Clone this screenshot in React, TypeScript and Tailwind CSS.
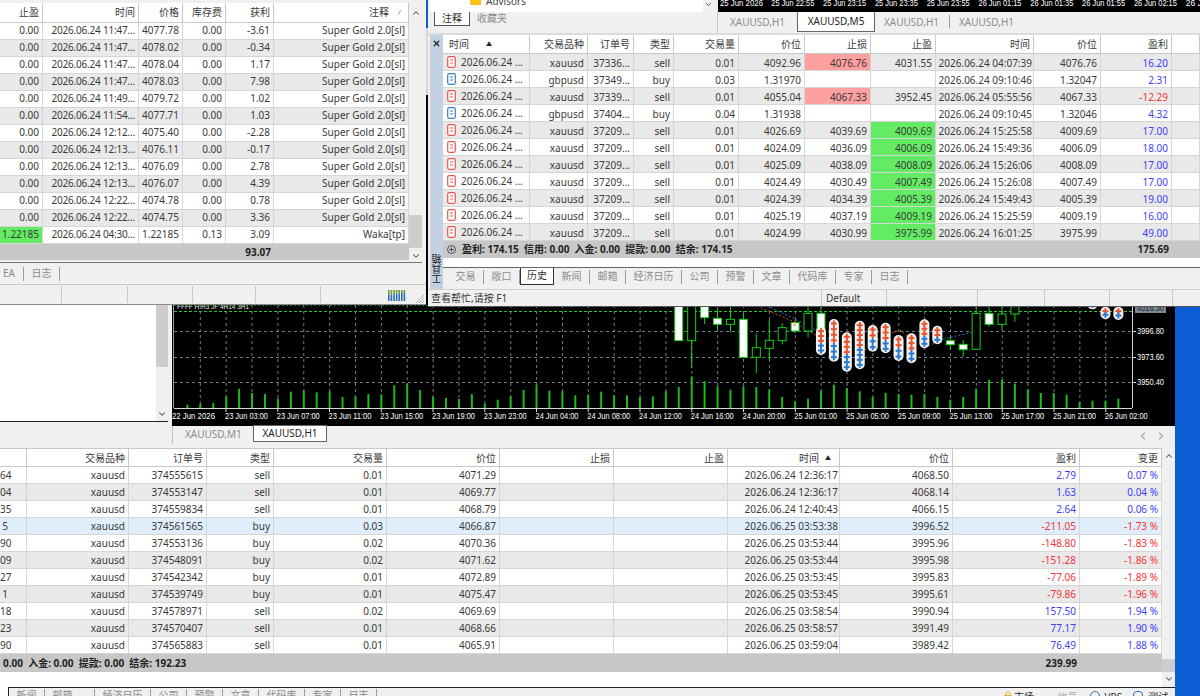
import React from "react";
import { X, ChevronUp, ChevronDown, ChevronLeft, ChevronRight, Lock } from "lucide-react";

type Cell = { t?: React.ReactNode; c?: string; bg?: string };
const cellBase = "h-[17px] text-right pr-[3px] border-r border-b border-[#d6d6d6] overflow-hidden whitespace-nowrap text-[#3a3a3a]";
const headBase = "leading-[19px] text-right pr-[3px] border-r border-[#c8c8c8] overflow-hidden whitespace-nowrap text-[#3a3a3a]";
const BLUE = "text-[#3f3ff5]";
const RED = "text-[#f23434]";
const GREEN = "bg-[#63ec63]";
const PINK = "bg-[#ffa0a0]";

function Row({ grid, cells, bg, lead }: { grid: string; cells: (string | Cell)[]; bg: string; lead: string }) {
  return (
    <div className={`grid ${grid} ${bg} ${lead}`}>
      {cells.map((c, i) => {
        const o: Cell = typeof c === "string" ? { t: c } : c;
        return (
          <div key={i} className={`${cellBase} ${o.c ?? ""} ${o.bg ?? ""}`}>
            {o.t}
          </div>
        );
      })}
    </div>
  );
}

function Head({ grid, labels, h }: { grid: string; labels: (string | React.ReactNode)[]; h: string }) {
  return (
    <div className={`grid ${grid} ${h} bg-white border-b border-[#c8c8c8]`}>
      {labels.map((l, i) => (
        <div key={i} className={headBase}>
          {l}
        </div>
      ))}
    </div>
  );
}

function TabItem({ label, w }: { label: string; w?: string }) {
  return (
    <div className={`px-[7.5px] h-[14px] leading-[13px] border-r border-[#9a9a9a] text-[#8c8c8c] whitespace-nowrap ${w ?? ""}`}>{label}</div>
  );
}

function DocIcon({ color }: { color: string }) {
  return (
    <svg width="9" height="12" viewBox="0 0 9 12" className="shrink-0">
      <rect x="0.7" y="0.7" width="7.6" height="10.6" rx="1.5" fill="#fff" stroke={color} strokeWidth="1.2" />
      <line x1="3" y1="4" x2="6" y2="4" stroke={color} strokeWidth="1" />
      <line x1="3" y1="7" x2="6" y2="7" stroke={color} strokeWidth="1" />
    </svg>
  );
}

/* ---------- top-left window ---------- */
const leftGrid = "grid-cols-[43px_96px_44px_43px_48px_135px]";
const leftRows = [
  ["11:47", "4077.78", "-3.61"],
  ["11:47", "4078.02", "-0.34"],
  ["11:47", "4078.04", "1.17"],
  ["11:47", "4078.03", "7.98"],
  ["11:49", "4079.72", "1.02"],
  ["11:54", "4077.71", "1.03"],
  ["12:12", "4075.40", "-2.28"],
  ["12:13", "4076.11", "-0.17"],
  ["12:13", "4076.09", "2.78"],
  ["12:13", "4076.07", "4.39"],
  ["12:22", "4074.78", "0.78"],
  ["12:22", "4074.75", "3.36"],
];

function LeftWindow() {
  const tight = "tracking-[-0.2px]";
  return (
    <div className="absolute left-0 top-0 w-[426px] h-[305px] bg-[#f0f0f0] flex flex-col border-b border-[#8a8a8a] z-20">
      <div className="h-[3px] shrink-0" />
      <div className="flex h-[257px] shrink-0">
        <div className="w-[409px] flex flex-col">
          <Head
            grid={leftGrid}
            h="h-[20px]"
            labels={[
              "止盈",
              "时间",
              "价格",
              "库存费",
              "获利",
              <span key="n" className="inline-flex items-center gap-[9px] pr-[4px]">
                注释
                <svg width="3" height="5" viewBox="0 0 3 5">
                  <line x1="0.3" y1="5" x2="2.7" y2="0" stroke="#999" strokeWidth="0.8" />
                </svg>
              </span>,
            ]}
          />
          {leftRows.map((r, i) => (
            <Row
              key={i}
              grid={leftGrid}
              lead="leading-[15px]"
              bg={i % 2 ? "bg-[#e9e9e9]" : "bg-white"}
              cells={["0.00", { t: `2026.06.24 ${r[0]}...`, c: tight }, r[1], "0.00", r[2], "Super Gold 2.0[sl]"]}
            />
          ))}
          <Row
            grid={leftGrid}
            lead="leading-[15px]"
            bg="bg-white"
            cells={[{ t: "1.22185", bg: GREEN }, { t: "2026.06.24 04:30...", c: tight }, "1.22185", "0.13", "3.09", "Waka[tp]"]}
          />
          <div className={`grid ${leftGrid} h-[17px] bg-[#c7c7c7]`}>
            <div className="col-span-5 text-right pr-[3px] font-bold leading-[16px] text-[#222]">93.07</div>
          </div>
        </div>
        <div className="w-[13px] flex flex-col items-center bg-[#f0f0f0] relative">
          <ChevronUp size={10} strokeWidth={2.5} className="mt-[5px] text-[#555]" />
          <div className="flex-1" />
          <div className="w-full h-[33px] bg-[#cdcdcd]" />
          <ChevronDown size={10} strokeWidth={2.5} className="mt-[3px] -mb-[1px] text-[#555]" />
        </div>
      </div>
      <div className="mt-[2px] h-[1px] w-[422px] bg-[#777]" />
      <div className="h-[21px] flex items-center shrink-0">
        <div className="pl-[3px] pr-[8px] h-[14px] leading-[13px] border-r border-[#9a9a9a] text-[#8c8c8c]">EA</div>
        <TabItem label="日志" />
      </div>
      <div className="flex-1 border-t border-[#c8c8c8] flex items-stretch relative">
        {["w-[62px]", "w-[66px]", "w-[65px]", "w-[63px]", "w-[65px]"].map((w) => (
          <div key={w} className={`${w} border-r border-[#c8c8c8] my-[1px]`} />
        ))}
        <svg width="19" height="11" viewBox="0 0 19 11" className="ml-[67px] mt-[5px]">
          {[0, 1, 2, 3, 4, 5, 6].map((i) => (
            <g key={i}>
              <rect x={i * 2.6} y={0} width="1.6" height={5 - i * 0.4} fill="#6b9a3c" />
              <rect x={i * 2.6} y={5 - i * 0.4} width="1.6" height={6 + i * 0.4} fill="#2f6fb5" />
            </g>
          ))}
        </svg>
        <svg width="9" height="9" viewBox="0 0 9 9" className="absolute right-[2px] bottom-[1px]">
          <path d="M9 1L1 9M9 4L4 9M9 7L7 9" stroke="#a0a0a0" strokeWidth="0.8" />
        </svg>
      </div>
    </div>
  );
}

/* ---------- top-right window ---------- */
const rightGrid = "grid-cols-[87px_58px_46px_40px_65px_66px_66px_65px_98px_67px_71px_28px]";

function sym(i: number) {
  const buy = i === 1 || i === 3;
  return (
    <div className="flex items-center h-full pl-[4px] gap-[5px]">
      <DocIcon color={buy ? "#3b80c4" : "#e8564e"} />
      <span>2026.06.24 ...</span>
    </div>
  );
}
type RR = [string, string, string, string, string, string, Cell | string, Cell | string, string, string, string];
const rightRows: RR[] = [
  ["xauusd", "37336...", "sell", "0.01", "4092.96", "", { t: "4076.76", bg: PINK }, "4031.55", "04:07:39", "4076.76", "16.20"],
  ["gbpusd", "37349...", "buy", "0.03", "1.31970", "", "", "", "09:10:46", "1.32047", "2.31"],
  ["xauusd", "37339...", "sell", "0.01", "4055.04", "", { t: "4067.33", bg: PINK }, "3952.45", "05:55:56", "4067.33", "-12.29"],
  ["gbpusd", "37404...", "buy", "0.04", "1.31938", "", "", "", "09:10:45", "1.32046", "4.32"],
  ["xauusd", "37209...", "sell", "0.01", "4026.69", "", "4039.69", { t: "4009.69", bg: GREEN }, "15:25:58", "4009.69", "17.00"],
  ["xauusd", "37209...", "sell", "0.01", "4024.09", "", "4036.09", { t: "4006.09", bg: GREEN }, "15:49:36", "4006.09", "18.00"],
  ["xauusd", "37209...", "sell", "0.01", "4025.09", "", "4038.09", { t: "4008.09", bg: GREEN }, "15:26:06", "4008.09", "17.00"],
  ["xauusd", "37209...", "sell", "0.01", "4024.49", "", "4030.49", { t: "4007.49", bg: GREEN }, "15:26:08", "4007.49", "17.00"],
  ["xauusd", "37209...", "sell", "0.01", "4024.39", "", "4034.39", { t: "4005.39", bg: GREEN }, "15:49:43", "4005.39", "19.00"],
  ["xauusd", "37209...", "sell", "0.01", "4025.19", "", "4037.19", { t: "4009.19", bg: GREEN }, "15:25:59", "4009.19", "16.00"],
  ["xauusd", "37209...", "sell", "0.01", "4024.99", "", "4030.99", { t: "3975.99", bg: GREEN }, "16:01:25", "3975.99", "49.00"],
];

const stripLabels = ["25 Jun 2026", "25 Jun 22:55", "25 Jun 23:15", "25 Jun 23:35", "25 Jun 23:55", "26 Jun 01:15", "26 Jun 01:35", "26 Jun 01:55", "26 Jun 02:15", "26 Jun"];

function TopStrip() {
  return (
    <svg width="482" height="12" viewBox="718 0 482 12" className="block bg-black">
      {stripLabels.map((l, i) => (
        <text key={i} x={i === 0 ? 720 : 719.5 + 51.8 * i} y="6" fill="#fff" fontFamily="'Liberation Sans', sans-serif" fontSize="8.5" textLength={i === 9 ? undefined : 43} lengthAdjust="spacingAndGlyphs">
          {l}
        </text>
      ))}
    </svg>
  );
}

function RightWindow() {
  return (
    <div className="absolute left-[428px] top-0 w-[772px] h-[307px] bg-[#f0f0f0] flex flex-col border-b border-[#555] z-10">
      <div className="h-[12px] flex shrink-0">
        <div className="w-[2px] bg-[#f0f0f0]" />
        <div className="w-[273px] bg-white relative overflow-hidden">
          <div className="absolute left-[40px] -top-[1px] w-[11px] h-[6px] bg-[#f8c41a]" />
          <div className="absolute left-[56px] -top-[5px] leading-[12px] text-[#444]">Advisors</div>
        </div>
        <div className="w-[10px] bg-[#f0f0f0] flex justify-center">
          <ChevronDown size={9} strokeWidth={2.5} className="text-[#555]" />
        </div>
        <div className="w-[5px]" />
        <TopStrip />
      </div>
      <div className="h-[23px] flex shrink-0 border-b-2 border-[#dcdcdc]">
        <div className="w-[290px] flex items-start pl-[6px] border-r border-[#c8c8c8]">
          <div className="w-[36px] h-[14px] leading-[13px] bg-white border-x border-b border-[#555] text-center text-[#333]">注释</div>
          <div className="ml-[7px] text-[#8c8c8c] leading-[13px]">收藏夹</div>
        </div>
        <div className="flex items-start pl-[12px]">
          <div className="w-[55px] text-[#8c8c8c] leading-[20px] whitespace-nowrap">XAUUSD,H1</div>
          <div className="ml-[12px] w-[78px] h-[20px] bg-white border border-t-0 border-[#666] text-center leading-[19px] text-[#222]">XAUUSD,M5</div>
          <div className="ml-[9px] w-[55px] text-[#8c8c8c] leading-[20px] whitespace-nowrap">XAUUSD,H1</div>
          <div className="ml-[10px] mt-[3px] w-[1px] h-[13px] bg-[#9a9a9a]" />
          <div className="ml-[9px] w-[55px] text-[#8c8c8c] leading-[20px] whitespace-nowrap">XAUUSD,H1</div>
        </div>
      </div>
      <div className="flex flex-1 min-h-0">
        <div className="w-[2px]" />
        <div className="w-[13px] h-[254px] bg-[#c3d2e2] flex flex-col items-center justify-between shrink-0">
          <X size={9} strokeWidth={3.5} className="mt-[4px] text-[#222]" />
          <div className="[writing-mode:vertical-rl] rotate-180 mb-[5px] leading-[12px] text-[#222]">工具箱</div>
        </div>
        <div className="flex-1 flex flex-col min-w-0">
          <Head
            grid={rightGrid}
            h="h-[19px]"
            labels={[
              <div key="a" className="flex items-center h-full pl-[6px] text-left">
                <span>时间</span>
                <span className="ml-[17px] text-[6px] text-[#222]">▲</span>
              </div>,
              "交易品种",
              "订单号",
              "类型",
              "交易量",
              "价位",
              "止损",
              "止盈",
              "时间",
              "价位",
              "盈利",
              "",
            ]}
          />
          {rightRows.map((r, i) => (
            <Row
              key={i}
              grid={rightGrid}
              lead="leading-[18px]"
              bg={i % 2 ? "bg-white" : "bg-[#e9e9e9]"}
              cells={[
                { t: sym(i), c: "!text-left !pr-0" },
                r[0],
                r[1],
                r[2],
                r[3],
                r[4],
                r[6],
                r[7],
                { t: `2026.06.24 ${r[8]}`, c: "!pr-[1px]" },
                r[9],
                { t: r[10], c: r[10].startsWith("-") ? RED : BLUE },
                "",
              ]}
            />
          ))}
          <div className="h-[17px] bg-[#c7c7c7] relative flex items-center pl-[4px] gap-[6px] font-bold text-[#222] shrink-0">
            <svg width="9" height="9" viewBox="0 0 9 9">
              <circle cx="4.5" cy="4.5" r="4" fill="none" stroke="#333" strokeWidth="0.8" />
              <path d="M2.3 4.5h4.4M4.5 2.3v4.4" stroke="#333" strokeWidth="0.8" />
            </svg>
            <span className="whitespace-nowrap">盈利: 174.15&nbsp; 信用: 0.00&nbsp; 入金: 0.00&nbsp; 提款: 0.00&nbsp; 结余: 174.15</span>
            <span className="absolute right-[31px] top-0 leading-[16px]">175.69</span>
          </div>
          <div className="h-[9px] bg-white shrink-0" />
          <div className="h-[22px] border-t border-[#666] flex items-start shrink-0 pl-[5px]">
            <div className="flex items-center h-[17px]">
              <TabItem label="交易" />
              <TabItem label="敞口" />
            </div>
            <div className="w-[34px] h-[17px] bg-white border-x border-b border-[#333] text-center leading-[15px] text-[#333]">历史</div>
            <div className="flex items-center h-[17px]">
              <TabItem label="新闻" />
              <TabItem label="邮箱" />
              <TabItem label="经济日历" />
              <TabItem label="公司" />
              <TabItem label="预警" />
              <TabItem label="文章" />
              <TabItem label="代码库" />
              <TabItem label="专家" />
              <TabItem label="日志" />
            </div>
          </div>
        </div>
      </div>
      <div className="h-[17px] shrink-0 border-t border-[#d0d0d0] flex relative">
        <div className="w-[394px] pl-[3px] leading-[16px] text-[#333] border-r border-[#c8c8c8]">查看帮忙,请按 F1</div>
        <div className="w-[65px] pl-[4px] leading-[16px] text-[#333] border-r border-[#c8c8c8]">Default</div>
        {["w-[91px]", "w-[67px]", "w-[65px]", "w-[63px]"].map((w) => (
          <div key={w} className={`${w} border-r border-[#c8c8c8]`} />
        ))}
      </div>
    </div>
  );
}

/* ---------- chart ---------- */
const barH = [10, 13, 15, 35, 58, 45, 42, 28, 49, 52, 47, 50, 33, 35, 42, 41, 68, 74, 54, 34, 30, 27, 42, 13, 25, 35, 54, 70, 52, 50, 38, 41, 49, 38, 38, 33, 35, 50, 63, 95, 80, 65, 55, 65, 63, 55, 33, 20, 28, 52, 70, 60, 50, 33, 45, 42, 40, 42, 33, 25, 33, 58, 85, 85, 73, 55, 45, 45, 40, 17, 22, 22, 28];
const bx = (i: number) => 187.4 + 12.93 * i;
const yv = (v: number) => 300 + v / 3;
// [index, white?, bodyTop, bodyBottom, wickTop, wickBottom] in 3x crop units
const candles: [number, boolean, number, number, number, number][] = [
  [38, true, 0, 122, 0, 122],
  [39, false, 0, 122, 0, 205],
  [40, true, 0, 53, 0, 72],
  [41, true, 55, 73, 25, 90],
  [42, false, 58, 73, 20, 98],
  [43, true, 58, 172, 40, 172],
  [44, false, 143, 172, 100, 220],
  [45, false, 121, 145, 60, 180],
  [46, false, 83, 122, 70, 133],
  [47, true, 68, 93, 60, 100],
  [48, false, 40, 93, 20, 112],
  [49, true, 40, 100, 20, 120],
  [50, false, 105, 165, 90, 175],
  [51, false, 140, 162, 120, 180],
  [52, false, 98, 152, 80, 170],
  [53, false, 95, 120, 80, 145],
  [54, false, 95, 125, 80, 145],
  [55, false, 125, 158, 110, 170],
  [56, false, 122, 165, 110, 180],
  [57, false, 90, 125, 70, 135],
  [58, false, 95, 120, 85, 130],
  [59, true, 122, 134, 110, 150],
  [60, true, 133, 149, 120, 170],
  [61, false, 40, 148, 20, 148],
  [62, true, 40, 73, 20, 80],
  [63, false, 42, 73, 20, 88],
  [64, false, 20, 42, 0, 65],
];
const pills: [number, number, number][] = [
  [49, 80, 165],
  [50, 57, 185],
  [51, 97, 215],
  [52, 62, 208],
  [53, 75, 155],
  [54, 68, 160],
  [55, 105, 183],
  [56, 100, 190],
  [57, 58, 145],
  [58, 77, 133],
  [70, 0, 28],
  [71, 20, 58],
  [72, 20, 60],
];
const tickX = [172, ...Array.from({ length: 18 }, (_, k) => 225 + 51.75 * k)];
const tickL = ["22 Jun 2026", "23 Jun 03:00", "23 Jun 07:00", "23 Jun 11:00", "23 Jun 15:00", "23 Jun 19:00", "23 Jun 23:00", "24 Jun 04:00", "24 Jun 08:00", "24 Jun 12:00", "24 Jun 16:00", "24 Jun 20:00", "25 Jun 01:00", "25 Jun 05:00", "25 Jun 09:00", "25 Jun 13:00", "25 Jun 17:00", "25 Jun 21:00", "26 Jun 02:00"];
const font = "'Liberation Sans', sans-serif";

function Pill({ i, a, b }: { i: number; a: number; b: number }) {
  const x = bx(i);
  const t = yv(a);
  const bt = yv(b);
  const n = Math.max(2, Math.floor((bt - t - 3) / 5));
  return (
    <g>
      <rect x={x - 5} y={t} width="10" height={bt - t} rx="5" fill="#f0f0f0" />
      {Array.from({ length: n }, (_, k) => {
        const cy = t + 4.5 + k * ((bt - t - 9) / Math.max(1, n - 1));
        const col = k < n / 2 ? "#e8562c" : "#2a7bd0";
        return (
          <g key={k}>
            <rect x={x - 3} y={cy - 1} width="6" height="2" fill={col} />
            <rect x={x - 1} y={cy - 3} width="2" height="6" fill={col} />
          </g>
        );
      })}
    </g>
  );
}

function Chart() {
  const gridV = Array.from({ length: 36 }, (_, k) => 200.3 + 25.87 * k);
  return (
    <svg width="1003" height="122" viewBox="172 304 1003 122" className="block bg-black">
      <line x1="173.5" y1="304" x2="173.5" y2="408" stroke="#9a9a9a" />
      <text x="177" y="309" fill="#e8e8e8" fontFamily={font} fontSize="7" textLength="72" lengthAdjust="spacingAndGlyphs">
        FFFF H.H3 JF 4H14 3H1
      </text>
      <line x1="174" y1="305" x2="1132" y2="305" stroke="#2fbf2f" strokeDasharray="2 2" />
      <line x1="174" y1="311.5" x2="1132" y2="311.5" stroke="#2fbf2f" strokeDasharray="3 2" />
      {[331, 357, 382].map((y) => (
        <line key={y} x1="174" y1={y + 0.5} x2="1132" y2={y + 0.5} stroke="#6f7b88" strokeDasharray="3 3" />
      ))}
      {gridV.map((x) => (
        <line key={x} x1={x} y1="305" x2={x} y2="408" stroke="#6f7b88" strokeDasharray="3 3" />
      ))}
      <polyline points="757,306 795,322 820,338 835,345" fill="none" stroke="#d0522a" strokeDasharray="2 2" />
      <polyline points="767,306 793,318 815,330 830,340" fill="none" stroke="#2a7bd0" strokeDasharray="2 2" />
      <polyline points="865,350 880,338 900,330 910,338" fill="none" stroke="#d0522a" strokeDasharray="2 2" />
      <polyline points="925,348 940,340 960,335 975,332" fill="none" stroke="#2a7bd0" strokeDasharray="2 2" />
      {barH.map((h, i) => (
        <rect key={i} x={bx(i) - 1} y={408 - h / 3} width="2" height={h / 3} fill="#1fb81f" />
      ))}
      {candles.map(([i, w, bt, bb, wt, wb]) => (
        <g key={i}>
          <line x1={bx(i)} y1={yv(wt)} x2={bx(i)} y2={yv(wb)} stroke="#12d012" />
          <rect x={bx(i) - 4} y={yv(bt)} width="8" height={(bb - bt) / 3} fill={w ? "#fff" : "#000"} stroke="#12d012" />
        </g>
      ))}
      <text x={bx(47) - 2} y="326" fill="#e8562c" fontFamily={font} fontSize="6">2</text>
      {pills.map(([i, a, b]) => (
        <Pill key={i} i={i} a={a} b={b} />
      ))}
      <line x1="174" y1="408.5" x2="1132" y2="408.5" stroke="#d8d8d8" />
      <line x1="1132.5" y1="305" x2="1132.5" y2="408" stroke="#d8d8d8" />
      {tickX.map((x, i) => (
        <g key={i}>
          {i > 0 && <line x1={x + 1} y1="408" x2={x + 1} y2="412" stroke="#d8d8d8" />}
          <text x={x} y="419" fill="#fff" fontFamily={font} fontSize="8.5" textLength="43" lengthAdjust="spacingAndGlyphs">
            {tickL[i]}
          </text>
        </g>
      ))}
      <rect x="1135" y="304" width="31" height="9" fill="#7c8a98" />
      <text x="1137" y="311" fill="#1c1c1c" fontFamily={font} fontSize="8.5" textLength="27" lengthAdjust="spacingAndGlyphs">4016.30</text>
      {[["3996.80", 334], ["3973.60", 360], ["3950.40", 385]].map(([l, y]) => (
        <g key={l as string}>
          <line x1="1132" y1={(y as number) - 2.5} x2="1136" y2={(y as number) - 2.5} stroke="#d8d8d8" />
          <text x="1137" y={y as number} fill="#fff" fontFamily={font} fontSize="8.5" textLength="27" lengthAdjust="spacingAndGlyphs">
            {l}
          </text>
        </g>
      ))}
    </svg>
  );
}

/* ---------- back window ---------- */
const backGrid = "grid-cols-[27px_102px_78px_67px_113px_113px_114px_114px_112px_113px_127px_82px]";
const backRows = [
  ["64", "374555615", "sell", "0.01", "4071.29", "2026.06.24 12:36:17", "4068.50", "2.79", "0.07 %"],
  ["04", "374553147", "sell", "0.01", "4069.77", "2026.06.24 12:36:17", "4068.14", "1.63", "0.04 %"],
  ["35", "374559834", "sell", "0.01", "4068.79", "2026.06.24 12:40:43", "4066.15", "2.64", "0.06 %"],
  ["5", "374561565", "buy", "0.03", "4066.87", "2026.06.25 03:53:38", "3996.52", "-211.05", "-1.73 %"],
  ["90", "374553136", "buy", "0.02", "4070.36", "2026.06.25 03:53:44", "3995.96", "-148.80", "-1.83 %"],
  ["09", "374548091", "buy", "0.02", "4071.62", "2026.06.25 03:53:44", "3995.98", "-151.28", "-1.86 %"],
  ["27", "374542342", "buy", "0.01", "4072.89", "2026.06.25 03:53:45", "3995.83", "-77.06", "-1.89 %"],
  ["1", "374539749", "buy", "0.01", "4075.47", "2026.06.25 03:53:45", "3995.61", "-79.86", "-1.96 %"],
  ["18", "374578971", "sell", "0.02", "4069.69", "2026.06.25 03:58:54", "3990.94", "157.50", "1.94 %"],
  ["23", "374570407", "sell", "0.01", "4068.66", "2026.06.25 03:58:57", "3991.49", "77.17", "1.90 %"],
  ["90", "374565883", "sell", "0.01", "4065.91", "2026.06.25 03:59:04", "3989.42", "76.49", "1.88 %"],
];

function BackWindow() {
  return (
    <div className="absolute left-0 top-[304px] w-[1175px] h-[392px] bg-[#f0f0f0] flex flex-col">
      <div className="flex h-[122px] shrink-0">
        <div className="w-[172px] flex flex-col shrink-0">
          <div className="w-[168px] h-[118px] flex border-b border-[#222] bg-white shrink-0">
            <div className="w-[156px]" />
            <div className="w-[12px] bg-[#f0f0f0] flex flex-col items-center">
              <div className="w-full h-[63px] bg-[#cdcdcd]" />
              <div className="flex-1" />
              <ChevronDown size={10} strokeWidth={2.5} className="mb-[2px] text-[#555]" />
            </div>
          </div>
        </div>
        <Chart />
      </div>
      <div className="h-[22px] flex shrink-0 items-start">
        <div className="ml-[172px] w-[1px] h-[18px] bg-[#c0c0c0]" />
        <div className="ml-[12px] w-[58px] text-[#8c8c8c] leading-[17px] whitespace-nowrap">XAUUSD,M1</div>
        <div className="ml-[10px] -mt-[1px] w-[74px] h-[17px] bg-white border border-[#666] text-center text-[#222] leading-[15px]">XAUUSD,H1</div>
        <div className="flex-1" />
        <div className="flex items-center gap-[6px] mr-[8px] mt-[4px] text-[#b0b0b0]">
          <ChevronLeft size={12} strokeWidth={2.5} />
          <ChevronRight size={12} strokeWidth={2.5} />
        </div>
      </div>
      <div className="flex shrink-0">
        <div className="w-[1162px] flex flex-col">
          <Head
            grid={backGrid}
            h="h-[19px] border-t"
            labels={[
              "",
              "交易品种",
              "订单号",
              "类型",
              "交易量",
              "价位",
              "止损",
              "止盈",
              <span key="t" className="inline-flex items-center pr-[5px]">
                时间<span className="ml-[6px] text-[6px] text-[#222]">▲</span>
              </span>,
              "价位",
              "盈利",
              "变更",
            ]}
          />
          {backRows.map((r, i) => {
            const neg = r[7].startsWith("-");
            const col = neg ? RED : BLUE;
            return (
              <Row
                key={i}
                grid={backGrid}
                lead="leading-[17px]"
                bg={i === 3 ? "bg-[#e0eefb]" : i % 2 ? "bg-[#e9e9e9]" : "bg-white"}
                cells={[
                  { t: <span className="inline-block w-[8px] text-right">{r[0]}</span>, c: "!text-left !pr-0" },
                  "xauusd",
                  r[1],
                  r[2],
                  r[3],
                  r[4],
                  "",
                  "",
                  { t: r[5], c: "!pr-[1px]" },
                  r[6],
                  { t: r[7], c: col },
                  { t: r[8], c: col },
                ]}
              />
            );
          })}
          <div className="h-[18px] bg-[#c7c7c7] relative font-bold text-[#222] pl-[3px] leading-[18px] whitespace-nowrap">
            0.00&nbsp; 入金: 0.00&nbsp; 提款: 0.00&nbsp; 结余: 192.23
            <span className="absolute right-[85px] top-0">239.99</span>
          </div>
        </div>
        <div className="w-[13px] flex flex-col items-center">
          <ChevronUp size={10} strokeWidth={2.5} className="mt-[3px] text-[#555]" />
          <div className="flex-1" />
          <div className="w-full h-[13px] bg-[#cdcdcd]" />
          <ChevronDown size={10} strokeWidth={2.5} className="mt-[2px] -mb-[12px] text-[#555]" />
        </div>
      </div>
      <div className="h-[15px] w-[1162px] bg-white shrink-0" />
      <div className="flex-1 flex shrink-0 overflow-hidden bg-white">
        <div className="w-[8px]" />
        <div className="flex-1 bg-[#f0f0f0] border-t border-l border-[#222] flex items-start relative">
          <div className="flex items-start mt-[1px]">
            <TabItem label="新闻" />
            <TabItem label="邮箱" w="w-[50px]" />
            <TabItem label="经济日历" />
            <TabItem label="公司" />
            <TabItem label="预警" />
            <TabItem label="文章" />
            <TabItem label="代码库" />
            <TabItem label="专家" />
            <TabItem label="日志" />
          </div>
          <div className="absolute left-[994px] top-[2px] flex items-start whitespace-nowrap text-[#333]">
            <Lock size={10} className="text-[#d9a514] mt-[1px]" />
            <span className="ml-[1px]">市场</span>
            <span className="ml-[9px] text-[#aaa]">⋄⋄ 信号</span>
            <span className="ml-[12px] w-[10px] h-[10px] rounded-full border border-[#2d6fb5] mt-[1px]" />
            <span className="ml-[5px]">VPS</span>
            <span className="ml-[11px] w-[10px] h-[10px] rounded-sm border border-[#2d6fb5] mt-[1px]" />
            <span className="ml-[5px]">测试</span>
          </div>
        </div>
      </div>
    </div>
  );
}

export default function App() {
  return (
    <div className="relative w-[1200px] h-[696px] overflow-hidden bg-[#0b5ed3] text-[10px] font-['Noto_Sans','Noto_Sans_CJK_SC',sans-serif]">
      <BackWindow />
      <div className="absolute left-[426px] top-0 w-[2px] h-[305px] flex flex-col z-10">
        <div className="h-[28px] bg-[#0b5ed3]" />
        <div className="h-[67px] bg-[#d8d8d8]" />
        <div className="flex-1 bg-black" />
      </div>
      <RightWindow />
      <LeftWindow />
    </div>
  );
}
